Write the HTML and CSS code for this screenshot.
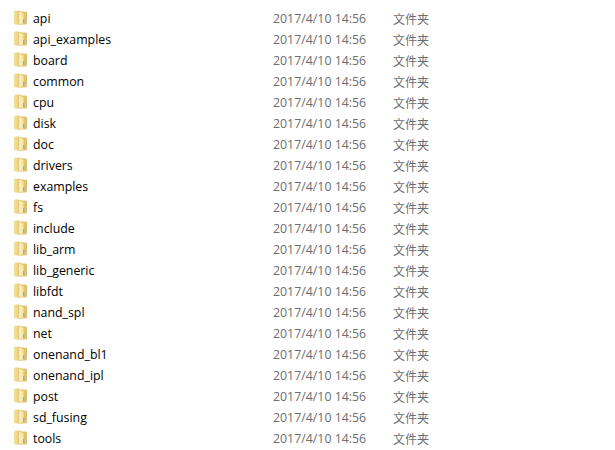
FILE: index.html
```html
<!DOCTYPE html>
<html>

<head>
  <meta charset="UTF-8" />
  <title>Files</title>
  <link rel="stylesheet" href="styles.css">
</head>

<body>
  <svg class="defs" width="0" height="0">
    <defs>
      <linearGradient id="back" x1="0" y1="0" x2="1" y2="0">
        <stop offset="0" stop-color="#f2df98" />
        <stop offset="0.55" stop-color="#e6cb78" />
        <stop offset="1" stop-color="#dcbf68" />
      </linearGradient>
      <linearGradient id="door" x1="0" y1="0" x2="1" y2="0">
        <stop offset="0" stop-color="#fdf3c4" />
        <stop offset="1" stop-color="#f4df96" />
      </linearGradient>
      <symbol id="folder" viewBox="0 0 13 15">
        <path d="M0 2 Q0 0.5 1.5 0.5 L5 0.5 L6 1.5 L11.5 1.5 Q13 1.5 13 3 L13 13 Q13 14.5 11.5 14.5 L1.5 14.5 Q0 14.5 0 13 Z" fill="url(#back)" />
        <path d="M4.5 0.8 L10 2.6 L10.4 14 L4.5 14.5 Z" fill="#dcc070" />
        <path d="M5.2 1.6 L9.6 3.2 L9.8 13.6 L5.2 14 Z" fill="url(#door)" />
        <rect x="9" y="9" width="1.4" height="4" fill="#74b8d8" />
      </symbol>
    </defs>
  </svg>

  <div class="file-list">
    <div class="file-row"><svg class="file-icon"><use href="#folder" /></svg><span class="file-name">api</span><span class="file-date">2017/4/10 14:56</span><span class="file-type">文件夹</span></div>
    <div class="file-row"><svg class="file-icon"><use href="#folder" /></svg><span class="file-name">api_examples</span><span class="file-date">2017/4/10 14:56</span><span class="file-type">文件夹</span></div>
    <div class="file-row"><svg class="file-icon"><use href="#folder" /></svg><span class="file-name">board</span><span class="file-date">2017/4/10 14:56</span><span class="file-type">文件夹</span></div>
    <div class="file-row"><svg class="file-icon"><use href="#folder" /></svg><span class="file-name">common</span><span class="file-date">2017/4/10 14:56</span><span class="file-type">文件夹</span></div>
    <div class="file-row"><svg class="file-icon"><use href="#folder" /></svg><span class="file-name">cpu</span><span class="file-date">2017/4/10 14:56</span><span class="file-type">文件夹</span></div>
    <div class="file-row"><svg class="file-icon"><use href="#folder" /></svg><span class="file-name">disk</span><span class="file-date">2017/4/10 14:56</span><span class="file-type">文件夹</span></div>
    <div class="file-row"><svg class="file-icon"><use href="#folder" /></svg><span class="file-name">doc</span><span class="file-date">2017/4/10 14:56</span><span class="file-type">文件夹</span></div>
    <div class="file-row"><svg class="file-icon"><use href="#folder" /></svg><span class="file-name">drivers</span><span class="file-date">2017/4/10 14:56</span><span class="file-type">文件夹</span></div>
    <div class="file-row"><svg class="file-icon"><use href="#folder" /></svg><span class="file-name">examples</span><span class="file-date">2017/4/10 14:56</span><span class="file-type">文件夹</span></div>
    <div class="file-row"><svg class="file-icon"><use href="#folder" /></svg><span class="file-name">fs</span><span class="file-date">2017/4/10 14:56</span><span class="file-type">文件夹</span></div>
    <div class="file-row"><svg class="file-icon"><use href="#folder" /></svg><span class="file-name">include</span><span class="file-date">2017/4/10 14:56</span><span class="file-type">文件夹</span></div>
    <div class="file-row"><svg class="file-icon"><use href="#folder" /></svg><span class="file-name">lib_arm</span><span class="file-date">2017/4/10 14:56</span><span class="file-type">文件夹</span></div>
    <div class="file-row"><svg class="file-icon"><use href="#folder" /></svg><span class="file-name">lib_generic</span><span class="file-date">2017/4/10 14:56</span><span class="file-type">文件夹</span></div>
    <div class="file-row"><svg class="file-icon"><use href="#folder" /></svg><span class="file-name">libfdt</span><span class="file-date">2017/4/10 14:56</span><span class="file-type">文件夹</span></div>
    <div class="file-row"><svg class="file-icon"><use href="#folder" /></svg><span class="file-name">nand_spl</span><span class="file-date">2017/4/10 14:56</span><span class="file-type">文件夹</span></div>
    <div class="file-row"><svg class="file-icon"><use href="#folder" /></svg><span class="file-name">net</span><span class="file-date">2017/4/10 14:56</span><span class="file-type">文件夹</span></div>
    <div class="file-row"><svg class="file-icon"><use href="#folder" /></svg><span class="file-name">onenand_bl1</span><span class="file-date">2017/4/10 14:56</span><span class="file-type">文件夹</span></div>
    <div class="file-row"><svg class="file-icon"><use href="#folder" /></svg><span class="file-name">onenand_ipl</span><span class="file-date">2017/4/10 14:56</span><span class="file-type">文件夹</span></div>
    <div class="file-row"><svg class="file-icon"><use href="#folder" /></svg><span class="file-name">post</span><span class="file-date">2017/4/10 14:56</span><span class="file-type">文件夹</span></div>
    <div class="file-row"><svg class="file-icon"><use href="#folder" /></svg><span class="file-name">sd_fusing</span><span class="file-date">2017/4/10 14:56</span><span class="file-type">文件夹</span></div>
    <div class="file-row"><svg class="file-icon"><use href="#folder" /></svg><span class="file-name">tools</span><span class="file-date">2017/4/10 14:56</span><span class="file-type">文件夹</span></div>
  </div>
</body>

</html>
```
FILE: styles.css
```css
/* Reset default margin and padding */
* {
  margin: 0;
  padding: 0;
  box-sizing: border-box;
}

body {
  height: 100vh;
  overflow: hidden;
  background-color: #fff;
  font-family: "Open Sans", "Noto Sans CJK SC", sans-serif;
  font-size: 12.35px;
}

.defs {
  display: block;
  height: 0;
}

.file-list {
  padding: 8px 0 0 14px;
}

/* One row per folder */
.file-row {
  display: grid;
  grid-template-columns: 19px 240px 120px 1fr;
  align-items: center;
  height: 21px;
}

.file-icon {
  width: 13px;
  height: 15px;
  margin-bottom: 2px;
}

.file-name {
  color: #000;
}

.file-date,
.file-type {
  color: #6d6d6d;
}

.file-type {
  font-size: 12px;
}
```
